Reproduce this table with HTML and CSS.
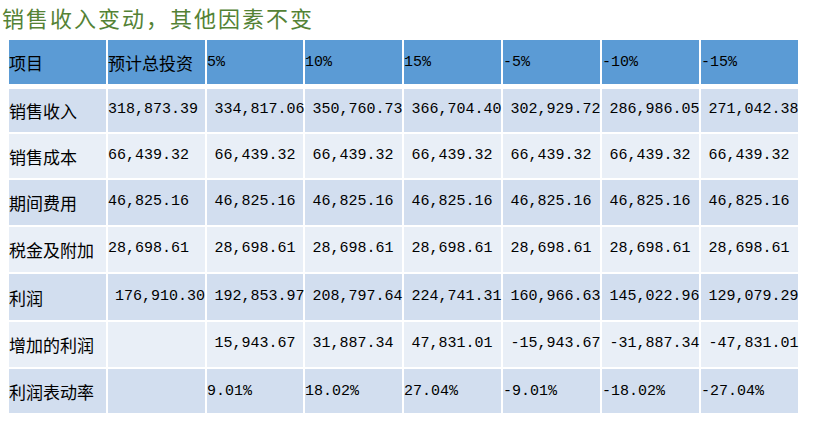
FILE: index.html
```html
<!DOCTYPE html>
<html lang="zh-CN">
<head>
<meta charset="utf-8">
<title>销售收入变动，其他因素不变</title>
<link rel="stylesheet" href="styles.css">
</head>
<body>
<div class="page">
  <h1 class="title">销售收入变动，其他因素不变</h1>
  <div class="grid">
    <div class="c hd lbl">项目</div>
    <div class="c hd lbl">预计总投资</div>
    <div class="c hd pct">5%</div>
    <div class="c hd pct">10%</div>
    <div class="c hd pct">15%</div>
    <div class="c hd pct">-5%</div>
    <div class="c hd pct">-10%</div>
    <div class="c hd pct">-15%</div>

    <div class="c dk lbl">销售收入</div>
    <div class="c dk num0">318,873.39</div>
    <div class="c dk num">334,817.06</div>
    <div class="c dk num">350,760.73</div>
    <div class="c dk num">366,704.40</div>
    <div class="c dk num">302,929.72</div>
    <div class="c dk num">286,986.05</div>
    <div class="c dk num">271,042.38</div>

    <div class="c lt lbl">销售成本</div>
    <div class="c lt num0">66,439.32</div>
    <div class="c lt num">66,439.32</div>
    <div class="c lt num">66,439.32</div>
    <div class="c lt num">66,439.32</div>
    <div class="c lt num">66,439.32</div>
    <div class="c lt num">66,439.32</div>
    <div class="c lt num">66,439.32</div>

    <div class="c dk lbl">期间费用</div>
    <div class="c dk num0">46,825.16</div>
    <div class="c dk num">46,825.16</div>
    <div class="c dk num">46,825.16</div>
    <div class="c dk num">46,825.16</div>
    <div class="c dk num">46,825.16</div>
    <div class="c dk num">46,825.16</div>
    <div class="c dk num">46,825.16</div>

    <div class="c lt lbl">税金及附加</div>
    <div class="c lt num0">28,698.61</div>
    <div class="c lt num">28,698.61</div>
    <div class="c lt num">28,698.61</div>
    <div class="c lt num">28,698.61</div>
    <div class="c lt num">28,698.61</div>
    <div class="c lt num">28,698.61</div>
    <div class="c lt num">28,698.61</div>

    <div class="c dk lbl">利润</div>
    <div class="c dk numr">176,910.30</div>
    <div class="c dk num">192,853.97</div>
    <div class="c dk num">208,797.64</div>
    <div class="c dk num">224,741.31</div>
    <div class="c dk num">160,966.63</div>
    <div class="c dk num">145,022.96</div>
    <div class="c dk num">129,079.29</div>

    <div class="c lt lbl">增加的利润</div>
    <div class="c lt num0"></div>
    <div class="c lt num">15,943.67</div>
    <div class="c lt num">31,887.34</div>
    <div class="c lt num">47,831.01</div>
    <div class="c lt num">-15,943.67</div>
    <div class="c lt num">-31,887.34</div>
    <div class="c lt num">-47,831.01</div>

    <div class="c dk lbl">利润表动率</div>
    <div class="c dk pct"></div>
    <div class="c dk pct">9.01%</div>
    <div class="c dk pct">18.02%</div>
    <div class="c dk pct">27.04%</div>
    <div class="c dk pct">-9.01%</div>
    <div class="c dk pct">-18.02%</div>
    <div class="c dk pct">-27.04%</div>
  </div>
</div>
</body>
</html>
```

FILE: styles.css
```css
html, body {
  margin: 0;
  padding: 0;
  background: #ffffff;
}

.page {
  padding: 6px 0 0 0;
  font-family: "Noto Sans CJK SC", "Noto Sans", sans-serif;
  color: #000000;
}

.title {
  margin: 0 0 12px 0;
  padding-left: 2px;
  font-size: 22px;
  line-height: 22px;
  height: 22px;
  font-weight: 400;
  letter-spacing: 2px;
  color: #548235;
  white-space: nowrap;
}

.grid {
  margin-left: 9px;
  display: grid;
  grid-template-columns: 97px 97px 96px 97px 97px 97px 97px 97px;
  grid-template-rows: 47px 43px 44px 45px 45px 46px 45px 44px;
  column-gap: 2px;
  row-gap: 2px;
  width: 790px;
}

.c {
  display: flex;
  align-items: center;
  white-space: nowrap;
  overflow: visible;
  min-width: 0;
}

.hd {
  background: #5b9bd5;
  margin-bottom: 3px;
}

.dk {
  background: #d2deef;
}

.lt {
  background: #e9eff7;
}

.lbl {
  font-family: "Noto Sans CJK SC", "Noto Sans", sans-serif;
  font-size: 17px;
  padding-left: 0;
}

.num, .num0, .numr, .pct {
  font-family: "Liberation Mono", "DejaVu Sans Mono", monospace;
  font-size: 15px;
  padding-bottom: 2px;
}

.num {
  padding-left: 7.5px;
}

.num0 {
  padding-left: 0;
}

.numr {
  justify-content: flex-end;
  padding-right: 0;
}

.pct {
  padding-left: 0;
  padding-bottom: 0;
}
```
